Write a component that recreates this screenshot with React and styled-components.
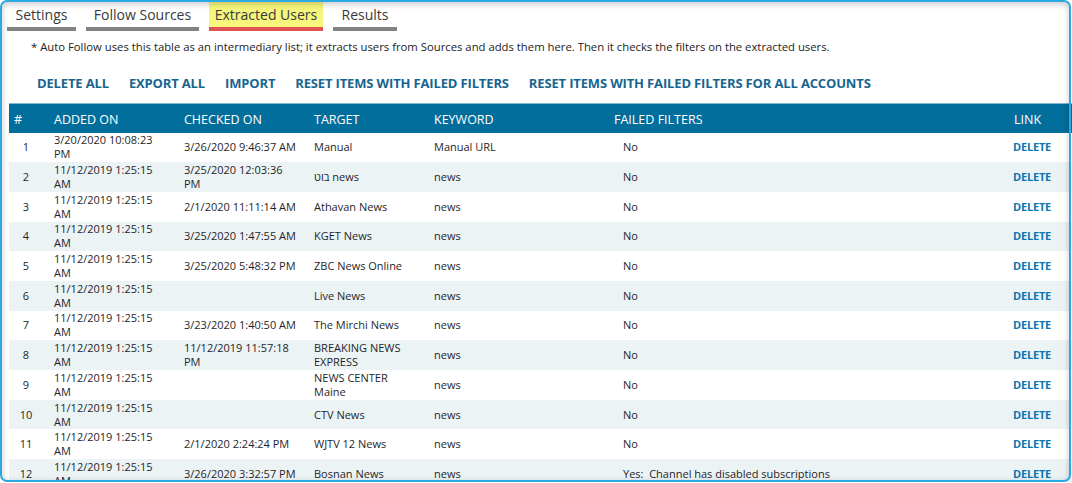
import React from 'react';
import styled, { createGlobalStyle } from 'styled-components';

const Global = createGlobalStyle`
  html, body { margin: 0; padding: 0; background: #fff; }
  body { font-family: "Open Sans", "Noto Sans", sans-serif; color: #1f1f24; }
`;

const Frame = styled.div`
  position: relative;
  width: 1071px;
  height: 482px;
  overflow-x: visible;
  overflow-y: clip;
  &::after {
    content: '';
    position: absolute;
    inset: 0;
    border: 2px solid #2aa9e2;
    border-radius: 7px;
    box-shadow: inset 0 2px 6px rgba(0, 0, 0, 0.22);
    pointer-events: none;
  }
`;

const Tabs = styled.nav`
  display: flex;
  gap: 10px;
  padding: 2px 0 0 7px;
`;

const Tab = styled.div`
  width: ${p => p.$w}px;
  height: 25px;
  display: flex;
  align-items: center;
  justify-content: center;
  font-size: 14px;
  color: #3a3a3a;
  background: ${p => (p.$active ? '#f6f67c' : 'transparent')};
  border-bottom: 4px solid ${p => (p.$active ? '#df5352' : '#828282')};
`;

const Note = styled.p`
  margin: 8px 0 0 31px;
  font-size: 11.3px;
  line-height: 16px;
  color: #222;
`;

const Actions = styled.div`
  display: flex;
  gap: 20px;
  margin: 19px 0 0 37px;
  height: 18px;
  align-items: center;
`;

const ActionLink = styled.a`
  font-size: 13px;
  font-weight: 700;
  letter-spacing: -0.15px;
  color: #17658f;
  text-decoration: none;
  white-space: nowrap;
  cursor: pointer;
`;

const Table = styled.table`
  margin: 11px 0 0 9px;
  border-collapse: collapse;
  table-layout: fixed;
  width: 1080px;
`;

const HeadRow = styled.tr`
  height: 29px;
  background: #026e9c;
  border-top: 1px solid #7fb6d0;
`;

const Th = styled.th`
  padding: 2px 5px 0;
  text-align: left;
  font-size: 12.5px;
  font-weight: 400;
  color: #fff;
  white-space: nowrap;
`;

const Row = styled.tr`
  height: 29.7px;
  background: ${p => (p.$alt ? '#ecf3f5' : '#fff')};
`;

const Td = styled.td`
  padding: 0 ${p => p.$pr ?? 10}px 0 ${p => p.$pl ?? 5}px;
  font-size: 11px;
  line-height: 14px;
  vertical-align: middle;
  text-align: ${p => p.$align || 'left'};
  color: #1f1f2a;
  white-space: pre-wrap;
`;

const DeleteLink = styled.a`
  font-size: 11px;
  font-weight: 700;
  letter-spacing: -0.2px;
  color: #0e76ad;
  cursor: pointer;
`;

const tabs = [
  { label: 'Settings', w: 69 },
  { label: 'Follow Sources', w: 113 },
  { label: 'Extracted Users', w: 114, active: true },
  { label: 'Results', w: 64 },
];

const actions = [
  'DELETE ALL',
  'EXPORT ALL',
  'IMPORT',
  'RESET ITEMS WITH FAILED FILTERS',
  'RESET ITEMS WITH FAILED FILTERS FOR ALL ACCOUNTS',
];

const OLD = '11/12/2019 1:25:15 AM';
const rows = [
  ['3/20/2020 10:08:23 PM', '3/26/2020 9:46:37 AM', 'Manual', 'Manual URL', 'No'],
  [OLD, '3/25/2020 12:03:36 PM', 'בוט news', 'news', 'No'],
  [OLD, '2/1/2020 11:11:14 AM', 'Athavan News', 'news', 'No'],
  [OLD, '3/25/2020 1:47:55 AM', 'KGET News', 'news', 'No'],
  [OLD, '3/25/2020 5:48:32 PM', 'ZBC News Online', 'news', 'No'],
  [OLD, '', 'Live News', 'news', 'No'],
  [OLD, '3/23/2020 1:40:50 AM', 'The Mirchi News', 'news', 'No'],
  [OLD, '11/12/2019 11:57:18 PM', 'BREAKING NEWS EXPRESS', 'news', 'No'],
  [OLD, '', 'NEWS CENTER Maine', 'news', 'No'],
  [OLD, '', 'CTV News', 'news', 'No'],
  [OLD, '2/1/2020 2:24:24 PM', 'WJTV 12 News', 'news', 'No'],
  [OLD, '3/26/2020 3:32:57 PM', 'Bosnan News', 'news', 'Yes:  Channel has disabled subscriptions'],
];

const cols = [40, 130, 130, 120, 180, 400, 60, 20];

export default function App() {
  return (
    <>
      <Global />
      <Frame>
        <Tabs>
          {tabs.map(t => (
            <Tab key={t.label} $w={t.w} $active={t.active}>
              {t.label}
            </Tab>
          ))}
        </Tabs>
        <Note>
          * Auto Follow uses this table as an intermediary list; it extracts users from Sources and adds them here. Then it checks the filters on the extracted users.
        </Note>
        <Actions>
          {actions.map(a => (
            <ActionLink key={a}>{a}</ActionLink>
          ))}
        </Actions>
        <Table>
          <colgroup>
            {cols.map((w, i) => (
              <col key={i} style={{ width: w }} />
            ))}
          </colgroup>
          <thead>
            <HeadRow>
              <Th>#</Th>
              <Th>ADDED ON</Th>
              <Th>CHECKED ON</Th>
              <Th>TARGET</Th>
              <Th>KEYWORD</Th>
              <Th>FAILED FILTERS</Th>
              <Th>LINK</Th>
              <Th />
            </HeadRow>
          </thead>
          <tbody>
            {rows.map((r, i) => (
              <Row key={i} $alt={i % 2 === 1}>
                <Td $align="center" $pl={2} $pr={8}>{i + 1}</Td>
                <Td>{r[0]}</Td>
                <Td $pr={10}>{r[1]}</Td>
                <Td $pr={13}>{r[2]}</Td>
                <Td>{r[3]}</Td>
                <Td $pl={14}>{r[4]}</Td>
                <Td $pl={4}>
                  <DeleteLink>DELETE</DeleteLink>
                </Td>
                <Td />
              </Row>
            ))}
          </tbody>
        </Table>
      </Frame>
    </>
  );
}
